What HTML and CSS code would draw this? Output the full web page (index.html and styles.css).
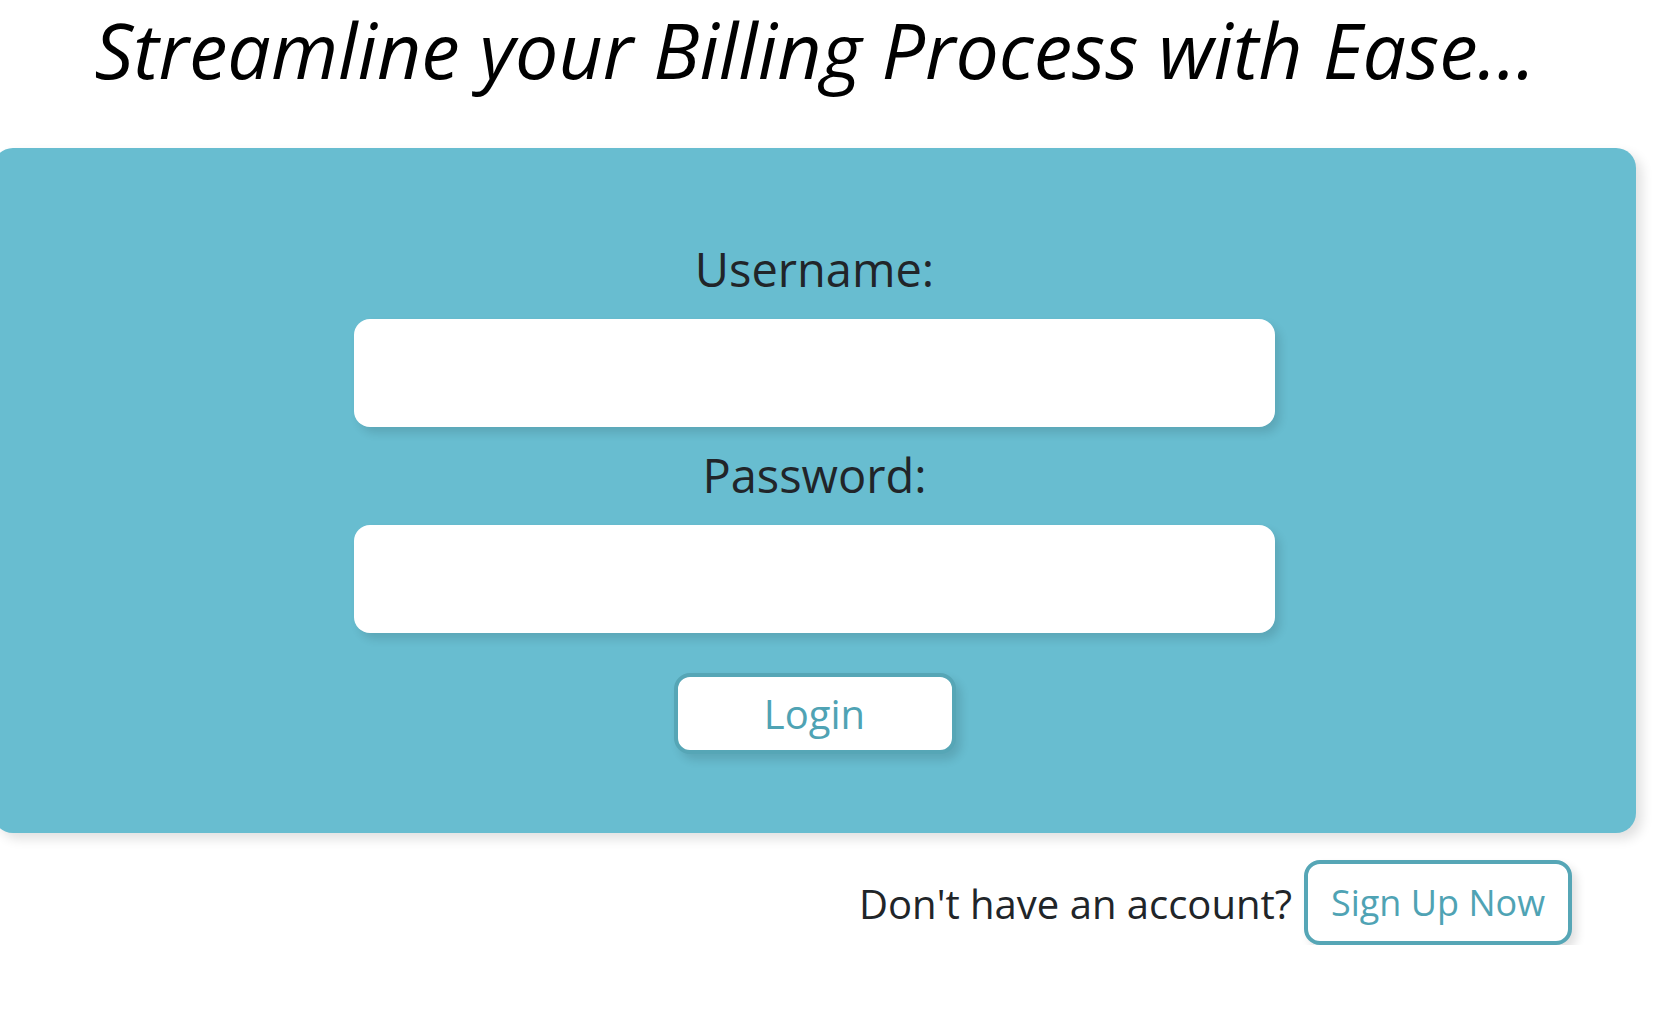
FILE: index.html
```html
<!DOCTYPE html>
<html lang="en">
<head>
<meta charset="utf-8">
<title>Login</title>
<link rel="stylesheet" href="styles.css">
</head>
<body>
<main class="page">
  <h1 class="title">Streamline your Billing Process with Ease...</h1>
  <form class="card">
    <label class="label" for="username">Username:</label>
    <input class="field" id="username" type="text">
    <label class="label label-pw" for="password">Password:</label>
    <input class="field" id="password" type="password">
    <button class="login" type="button">Login</button>
  </form>
  <div class="signup-row">
    <span class="signup-text">Don't have an account?</span>
    <button class="signup" type="button">Sign Up Now</button>
  </div>
</main>
</body>
</html>
```

FILE: styles.css
```css
* { box-sizing: border-box; }

html, body {
  margin: 0;
  padding: 0;
  background: #ffffff;
}

body {
  font-family: "Open Sans", "Noto Sans", sans-serif;
  color: #212529;
}

.page {
  width: 1630px;
  display: flex;
  flex-direction: column;
  align-items: center;
}

.title {
  margin: 0;
  font-size: 77px;
  line-height: 100px;
  font-style: italic;
  font-weight: 400;
  color: #000000;
  text-align: center;
}

.card {
  margin: 48px -6px 0 -7px;
  align-self: stretch;
  background: #68bdd0;
  border-radius: 20px;
  box-shadow: 6px 6px 12px rgba(0, 0, 0, 0.12);
  padding: 89px 0 79px;
  display: flex;
  flex-direction: column;
  align-items: center;
}

.label {
  font-size: 47px;
  line-height: 64px;
  color: #212529;
  margin-bottom: 18px;
}

.label-pw {
  margin-top: 16px;
}

.field {
  display: block;
  width: 921px;
  height: 108px;
  border: none;
  border-radius: 16px;
  background: #ffffff;
  box-shadow: 5px 6px 10px rgba(0, 0, 0, 0.12);
  outline: none;
}

.login {
  margin-top: 40px;
  width: 282px;
  height: 81px;
  border: 4px solid #56a6b6;
  border-radius: 16px;
  background: #ffffff;
  color: #4fa3b4;
  font-family: "Open Sans", "Noto Sans", sans-serif;
  font-size: 40px;
  padding: 0;
  box-shadow: 5px 6px 10px rgba(0, 0, 0, 0.12);
  cursor: pointer;
}

.signup-row {
  align-self: stretch;
  display: flex;
  justify-content: flex-end;
  align-items: center;
  gap: 12px;
  padding-right: 58px;
  margin-top: 27px;
}

.signup-text {
  font-size: 40px;
  line-height: 54px;
  color: #212529;
  margin-top: 2px;
}

.signup {
  height: 85px;
  width: 268px;
  border: 4px solid #56a6b6;
  border-radius: 16px;
  background: #ffffff;
  color: #4fa3b4;
  font-family: "Open Sans", "Noto Sans", sans-serif;
  font-size: 36px;
  padding: 0;
  box-shadow: 5px 6px 10px rgba(0, 0, 0, 0.12);
  cursor: pointer;
}
```
